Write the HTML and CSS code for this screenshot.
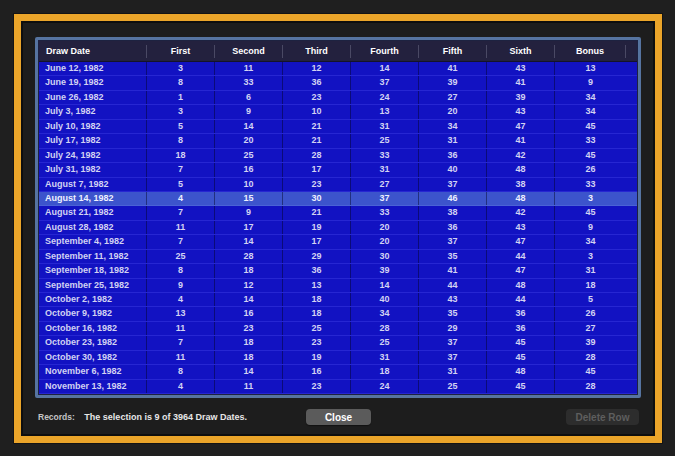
FILE: index.html
```html
<!DOCTYPE html>
<html lang="en">
<head>
    <meta charset="UTF-8">
    <meta name="viewport" content="width=device-width, initial-scale=1.0">
    <title>Draw Dates</title>
    <link rel="stylesheet" href="styles.css">
</head>
<body>
    <div class="frame">
        <div class="panel">

            <!-- Table of draws -->
            <div class="table-box">
                <div class="table-inner">
                    <div class="row head">
                        <div class="cell date">Draw Date</div>
                        <div class="cell">First</div>
                        <div class="cell">Second</div>
                        <div class="cell">Third</div>
                        <div class="cell">Fourth</div>
                        <div class="cell">Fifth</div>
                        <div class="cell">Sixth</div>
                        <div class="cell">Bonus</div>
                        <div class="filler"></div>
                    </div>
                    <div class="rows">
                        <div class="row"><div class="cell date">June 12, 1982</div><div class="cell">3</div><div class="cell">11</div><div class="cell">12</div><div class="cell">14</div><div class="cell">41</div><div class="cell">43</div><div class="cell">13</div></div>
                        <div class="row"><div class="cell date">June 19, 1982</div><div class="cell">8</div><div class="cell">33</div><div class="cell">36</div><div class="cell">37</div><div class="cell">39</div><div class="cell">41</div><div class="cell">9</div></div>
                        <div class="row"><div class="cell date">June 26, 1982</div><div class="cell">1</div><div class="cell">6</div><div class="cell">23</div><div class="cell">24</div><div class="cell">27</div><div class="cell">39</div><div class="cell">34</div></div>
                        <div class="row"><div class="cell date">July 3, 1982</div><div class="cell">3</div><div class="cell">9</div><div class="cell">10</div><div class="cell">13</div><div class="cell">20</div><div class="cell">43</div><div class="cell">34</div></div>
                        <div class="row"><div class="cell date">July 10, 1982</div><div class="cell">5</div><div class="cell">14</div><div class="cell">21</div><div class="cell">31</div><div class="cell">34</div><div class="cell">47</div><div class="cell">45</div></div>
                        <div class="row"><div class="cell date">July 17, 1982</div><div class="cell">8</div><div class="cell">20</div><div class="cell">21</div><div class="cell">25</div><div class="cell">31</div><div class="cell">41</div><div class="cell">33</div></div>
                        <div class="row"><div class="cell date">July 24, 1982</div><div class="cell">18</div><div class="cell">25</div><div class="cell">28</div><div class="cell">33</div><div class="cell">36</div><div class="cell">42</div><div class="cell">45</div></div>
                        <div class="row"><div class="cell date">July 31, 1982</div><div class="cell">7</div><div class="cell">16</div><div class="cell">17</div><div class="cell">31</div><div class="cell">40</div><div class="cell">48</div><div class="cell">26</div></div>
                        <div class="row"><div class="cell date">August 7, 1982</div><div class="cell">5</div><div class="cell">10</div><div class="cell">23</div><div class="cell">27</div><div class="cell">37</div><div class="cell">38</div><div class="cell">33</div></div>
                        <div class="row selected"><div class="cell date">August 14, 1982</div><div class="cell">4</div><div class="cell">15</div><div class="cell">30</div><div class="cell">37</div><div class="cell">46</div><div class="cell">48</div><div class="cell">3</div></div>
                        <div class="row"><div class="cell date">August 21, 1982</div><div class="cell">7</div><div class="cell">9</div><div class="cell">21</div><div class="cell">33</div><div class="cell">38</div><div class="cell">42</div><div class="cell">45</div></div>
                        <div class="row"><div class="cell date">August 28, 1982</div><div class="cell">11</div><div class="cell">17</div><div class="cell">19</div><div class="cell">20</div><div class="cell">36</div><div class="cell">43</div><div class="cell">9</div></div>
                        <div class="row"><div class="cell date">September 4, 1982</div><div class="cell">7</div><div class="cell">14</div><div class="cell">17</div><div class="cell">20</div><div class="cell">37</div><div class="cell">47</div><div class="cell">34</div></div>
                        <div class="row"><div class="cell date">September 11, 1982</div><div class="cell">25</div><div class="cell">28</div><div class="cell">29</div><div class="cell">30</div><div class="cell">35</div><div class="cell">44</div><div class="cell">3</div></div>
                        <div class="row"><div class="cell date">September 18, 1982</div><div class="cell">8</div><div class="cell">18</div><div class="cell">36</div><div class="cell">39</div><div class="cell">41</div><div class="cell">47</div><div class="cell">31</div></div>
                        <div class="row"><div class="cell date">September 25, 1982</div><div class="cell">9</div><div class="cell">12</div><div class="cell">13</div><div class="cell">14</div><div class="cell">44</div><div class="cell">48</div><div class="cell">18</div></div>
                        <div class="row"><div class="cell date">October 2, 1982</div><div class="cell">4</div><div class="cell">14</div><div class="cell">18</div><div class="cell">40</div><div class="cell">43</div><div class="cell">44</div><div class="cell">5</div></div>
                        <div class="row"><div class="cell date">October 9, 1982</div><div class="cell">13</div><div class="cell">16</div><div class="cell">18</div><div class="cell">34</div><div class="cell">35</div><div class="cell">36</div><div class="cell">26</div></div>
                        <div class="row"><div class="cell date">October 16, 1982</div><div class="cell">11</div><div class="cell">23</div><div class="cell">25</div><div class="cell">28</div><div class="cell">29</div><div class="cell">36</div><div class="cell">27</div></div>
                        <div class="row"><div class="cell date">October 23, 1982</div><div class="cell">7</div><div class="cell">18</div><div class="cell">23</div><div class="cell">25</div><div class="cell">37</div><div class="cell">45</div><div class="cell">39</div></div>
                        <div class="row"><div class="cell date">October 30, 1982</div><div class="cell">11</div><div class="cell">18</div><div class="cell">19</div><div class="cell">31</div><div class="cell">37</div><div class="cell">45</div><div class="cell">28</div></div>
                        <div class="row"><div class="cell date">November 6, 1982</div><div class="cell">8</div><div class="cell">14</div><div class="cell">16</div><div class="cell">18</div><div class="cell">31</div><div class="cell">48</div><div class="cell">45</div></div>
                        <div class="row"><div class="cell date">November 13, 1982</div><div class="cell">4</div><div class="cell">11</div><div class="cell">23</div><div class="cell">24</div><div class="cell">25</div><div class="cell">45</div><div class="cell">28</div></div>
                    </div>
                </div>
            </div>

            <!-- Bottom bar -->
            <div class="bottom-bar">
                <div class="records">
                    <span class="records-label">Records:</span>
                    <span class="records-text">The selection is 9 of 3964 Draw Dates.</span>
                </div>
                <button class="btn btn-close">Close</button>
                <button class="btn btn-delete" disabled>Delete Row</button>
            </div>

        </div>
    </div>
</body>
</html>
```

FILE: styles.css
```css
body {
    margin: 0;
    width: 675px;
    height: 456px;
    background: #1f1f1f;
    font-family: "Liberation Sans", Arial, sans-serif;
    overflow: hidden;
}

.frame {
    box-sizing: border-box;
    width: 648px;
    height: 429px;
    margin: 14px;
    border: 7px solid #eba52a;
    box-shadow: 0 0 0 1px #141414;
}

.panel {
    box-sizing: border-box;
    height: 100%;
    padding: 14px 12px 0 12px;
    background: #1d1d1d;
    border: 2px solid #0e0e0e;
}

.table-box {
    height: 361px;
    box-sizing: border-box;
    border: 3px solid #5674a0;
    border-radius: 2px;
}

.table-inner {
    height: 100%;
    box-sizing: border-box;
    border: 1px solid #1d2240;
    overflow: hidden;
}

.row {
    display: grid;
    grid-template-columns: 108px repeat(6, 68px) 71px 1fr;
    height: 14.45px;
    box-sizing: border-box;
    background: #1212c2;
    border-bottom: 1px solid #2626d2;
    align-items: stretch;
}

.cell {
    box-sizing: border-box;
    font-size: 9px;
    font-weight: bold;
    line-height: 13.45px;
    color: #d2d2f2;
    text-align: center;
    border-right: 1px solid #0b0b78;
    white-space: nowrap;
}

.row .cell:nth-child(8) {
    border-right: none;
}

.cell.date {
    text-align: left;
    padding-left: 6px;
}

.row.selected {
    background: #3c54cc;
    border-bottom-color: #4a62d6;
}

.row.selected .cell {
    color: #eef0ff;
    border-right-color: #22307e;
}

/* Header row */
.row.head {
    height: 21px;
    background: #23213e;
    border-bottom: 1px solid #14132a;
    align-items: center;
}

.row.head .cell {
    height: 13px;
    line-height: 13px;
    color: #ffffff;
    border-right: 1px solid #4a4964;
}

.row.head .cell:nth-child(8) {
    border-right: 1px solid #4a4964;
}

.row.head .cell.date {
    padding-left: 7px;
}

/* Bottom bar */
.bottom-bar {
    display: grid;
    grid-template-columns: 1fr auto 1fr;
    align-items: center;
    margin-top: 11px;
    padding: 0 2px 0 3px;
}

.records {
    font-size: 9px;
    font-weight: bold;
    white-space: nowrap;
}

.records-label {
    color: #c4c4c4;
    font-size: 8.5px;
}

.records-text {
    color: #e6e6e6;
    margin-left: 7px;
}

.btn {
    height: 16px;
    padding: 0;
    border: none;
    border-radius: 4px;
    font-family: "Liberation Sans", Arial, sans-serif;
    font-size: 10px;
    font-weight: bold;
}

.btn-close {
    width: 65px;
    background: #5b5b5b;
    color: #ffffff;
    box-shadow: 0 1px 1px rgba(0,0,0,0.4);
}

.btn-delete {
    justify-self: end;
    width: 73px;
    background: #2d2d2d;
    color: #5e5e5e;
}
```
